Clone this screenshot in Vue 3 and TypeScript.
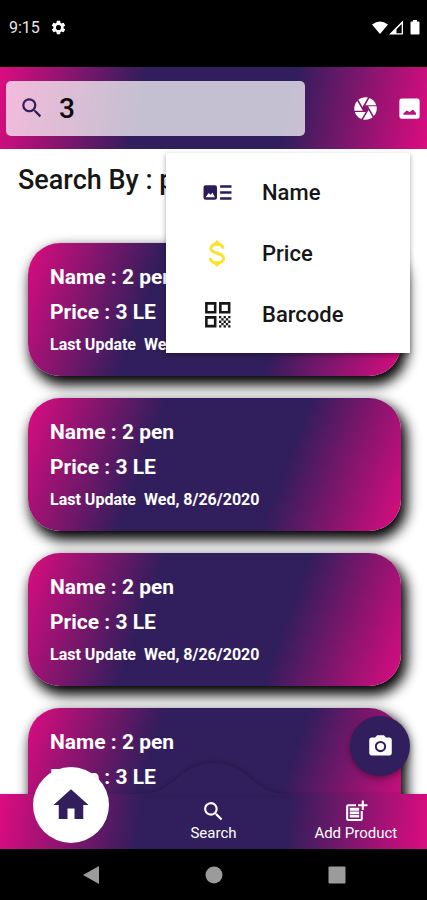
<script setup lang="ts">
import { ref } from 'vue'

interface Product {
  id: number
  name: string
  price: string
  updated: string
}

const query = ref('3')
const searchBy = ref('price')

const products = ref<Product[]>(
  [1, 2, 3, 4].map((id) => ({ id, name: '2 pen', price: '3 LE', updated: 'Wed, 8/26/2020' })),
)
</script>

<template>
  <div class="screen">
    <div class="status">
      <span class="clock">9:15</span>
      <svg class="gear" viewBox="0 0 24 24" aria-hidden="true">
        <path d="M19.14 12.94c.04-.3.06-.61.06-.94s-.02-.64-.07-.94l2.03-1.58a.49.49 0 0 0 .12-.61l-1.92-3.32a.49.49 0 0 0-.59-.22l-2.39.96a7 7 0 0 0-1.62-.94l-.36-2.54A.48.48 0 0 0 13.92 2.4h-3.84a.48.48 0 0 0-.47.41l-.36 2.54a7.3 7.3 0 0 0-1.62.94l-2.39-.96a.48.48 0 0 0-.59.22L2.74 8.87a.47.47 0 0 0 .12.61l2.03 1.58c-.05.3-.09.63-.09.94s.02.64.07.94l-2.03 1.58a.49.49 0 0 0-.12.61l1.92 3.32c.12.22.37.29.59.22l2.39-.96c.5.38 1.03.7 1.62.94l.36 2.54c.05.24.24.41.48.41h3.84c.24 0 .44-.17.47-.41l.36-2.54a7 7 0 0 0 1.62-.94l2.39.96c.22.08.47 0 .59-.22l1.92-3.32a.47.47 0 0 0-.12-.61zM12 15.600a3.600 3.600 0 1 1 0-7.200 3.600 3.600 0 0 1 0 7.200z" />
      </svg>
      <svg class="signals" viewBox="0 0 50 16" aria-hidden="true">
        <path d="M1 4.500Q9 -1.500 17 4.500L9 14z" />
        <path fill-rule="evenodd" d="M18 14.500L32 .5V14.500zM25.500 13.200H30.700V4L25.500 9.200z" />
        <path d="M42 1.500V0H46V1.500H47.500Q48.500 1.500 48.500 2.500V13.500Q48.500 14.500 47.500 14.500H40.500Q39.500 14.500 39.500 13.500V2.500Q39.500 1.500 40.500 1.500z" />
      </svg>
    </div>

    <header class="toolbar">
      <label class="field">
        <svg viewBox="0 0 24 24" aria-hidden="true">
          <path d="M15.500 14h-.79l-.28-.27A6.500 6.500 0 1 0 13.730 14.430l.27.28v.79l5 4.990L20.490 19zm-6 0a4.500 4.500 0 1 1 0-9 4.500 4.500 0 0 1 0 9z" />
        </svg>
        <input v-model="query" type="text" aria-label="Search products" />
      </label>
      <button class="tool" type="button" aria-label="Camera">
        <svg viewBox="0 0 24 24">
          <path d="M9.400 10.500l4.770-8.260C13.470 2.090 12.750 2 12 2c-2.400 0-4.600.85-6.320 2.250l3.660 6.350.06-.1zM21.540 9c-.92-2.920-3.150-5.260-6-6.340L11.880 9h9.660zm.26 1h-7.490l.29.5 4.760 8.250C21 16.970 22 14.610 22 12c0-.69-.07-1.350-.2-2zM8.540 12l-3.900-6.750C3.010 7.030 2 9.390 2 12c0 .69.07 1.350.2 2h7.490l-1.150-2zm-6.080 3c.92 2.920 3.150 5.260 6 6.340L12.120 15H2.460zm11.270 0l-3.900 6.760c.7.15 1.420.24 2.170.24 2.400 0 4.600-.85 6.320-2.250l-3.660-6.350-.93 1.600z" />
        </svg>
      </button>
      <button class="tool" type="button" aria-label="Gallery">
        <svg viewBox="0 0 24 24">
          <path fill-rule="evenodd" d="M5 3H19Q21 3 21 5V19Q21 21 19 21H5Q3 21 3 19V5Q3 3 5 3zM6.500 17.500H17.800V16L15 12.800L12.200 15.200L9.500 13.800L6.500 16.500z" />
        </svg>
      </button>
    </header>

    <main class="content">
      <h1>Search By : {{ searchBy }}</h1>

      <div class="menu" role="menu">
        <button type="button" role="menuitem" @click="searchBy = 'name'">
          <svg viewBox="0 0 28 28" fill="#2d1a58" aria-hidden="true">
            <path fill-rule="evenodd" d="M2.500 7H11.500Q13.500 7 13.500 9V19Q13.500 21 11.500 21H2.500Q.5 21 .5 19V9Q.5 7 2.500 7zM2.500 18.500H11.500L9 14L7.500 16.500L5.500 14.500z" />
            <path d="M16.500 7H27.500V9.300H16.500zM16.500 12.800H27.500V15.100H16.500zM16.500 18.700H27.500V21H16.500z" />
          </svg>
          <span>Name</span>
        </button>
        <button type="button" role="menuitem" @click="searchBy = 'price'">
          <svg viewBox="0 0 28 28" aria-hidden="true">
            <path fill="none" stroke="#fce22b" stroke-width="2.800" d="M19.500 9.500C19 6.500 16.500 5 13.500 5S7.500 6.600 7.500 9.200C7.500 15 20 12.500 20 18.600C20 21.500 17 23 13.500 23S7.200 21.500 6.900 18.200" />
            <path fill="#fce22b" d="M13.500 1L17.500 5H9.500zM13.500 27L17.500 23H9.500z" />
          </svg>
          <span>Price</span>
        </button>
        <button type="button" role="menuitem" @click="searchBy = 'barcode'">
          <svg viewBox="0 0 28 28" fill="#161616" aria-hidden="true">
            <path fill-rule="evenodd" d="M2 2H13V13H2zM4.500 4.500V10.500H10.500V4.500zM15.500 2H26.500V13H15.500zM18 4.500V10.500H24V4.500zM2 15.500H13V26.500H2zM4.500 18V24H10.500V18z" />
            <path d="M15.500 15.500h2.200v2.200h-2.200zM19.900 15.500h2.200v2.200h-2.200zM24.300 15.500h2.200v2.200h-2.200zM17.700 17.700h2.200v2.200h-2.200zM22.100 17.700h2.200v2.200h-2.200zM15.500 19.900h2.200v2.200h-2.200zM19.900 19.900h2.200v2.200h-2.200zM24.300 19.900h2.200v2.200h-2.200zM17.700 22.100h2.200v2.200h-2.200zM22.100 22.100h2.200v2.200h-2.200zM15.500 24.300h2.200v2.200h-2.200zM19.900 24.300h2.200v2.200h-2.200zM24.300 24.300h2.200v2.200h-2.200z" />
          </svg>
          <span>Barcode</span>
        </button>
      </div>

      <ul class="products">
        <li v-for="product in products" :key="product.id" class="card">
          <p>Name : {{ product.name }}</p>
          <p>Price : {{ product.price }}</p>
          <p class="updated"><span>Last Update</span><span>{{ product.updated }}</span></p>
        </li>
      </ul>

      <button class="fab" type="button" aria-label="Scan with camera">
        <svg viewBox="0 0 24 24">
          <circle cx="12" cy="12" r="3.200" />
          <path d="M9 2L7.170 4H4c-1.100 0-2 .9-2 2v12c0 1.100.9 2 2 2h16c1.100 0 2-.9 2-2V6c0-1.100-.9-2-2-2h-3.170L15 2H9zm3 15a5 5 0 1 1 0-10 5 5 0 0 1 0 10z" />
        </svg>
      </button>
    </main>

    <nav class="tabs">
      <svg class="bump" viewBox="0 0 150 34" aria-hidden="true">
        <path d="M0 33C38 33 38 2 75 2S112 33 150 33V34H0z" />
      </svg>
      <a class="home" href="#home" aria-label="Home">
        <svg viewBox="0 0 24 24"><path d="M10 20v-6h4v6h5v-8h3L12 3 2 12h3v8z" /></svg>
      </a>
      <a class="tab" href="#search">
        <svg viewBox="0 0 24 24" aria-hidden="true">
          <path d="M15.500 14h-.79l-.28-.27A6.500 6.500 0 1 0 13.730 14.430l.27.28v.79l5 4.990L20.490 19zm-6 0a4.500 4.500 0 1 1 0-9 4.500 4.500 0 0 1 0 9z" />
        </svg>
        <span>Search</span>
      </a>
      <a class="tab" href="#add">
        <svg viewBox="0 0 24 24" aria-hidden="true">
          <path d="M17 19.200H5V7h7.500V5H5Q3 5 3 7V19.200Q3 21.200 5 21.200H17Q19 21.200 19 19.200V11.500H17z" />
          <path d="M18 1.500h2V5h3.500v2H20v3.500h-2V7h-3.500V5H18z" />
          <path d="M6.500 8.500H15.500V11.200H6.500zM6.500 11.900H15.500V14.300H6.500zM6.500 15H15.500V17.700H6.500z" />
        </svg>
        <span>Add Product</span>
      </a>
    </nav>

    <div class="system">
      <button type="button" aria-label="Back"><svg viewBox="0 0 18 20"><path d="M17 1V19L1 10z" /></svg></button>
      <button type="button" aria-label="Home screen"><svg viewBox="0 0 18 20"><circle cx="9" cy="10" r="8.500" /></svg></button>
      <button type="button" aria-label="Recent apps"><svg viewBox="0 0 18 20"><rect x=".5" y="1.500" width="17" height="17" rx="1" /></svg></button>
    </div>
  </div>
</template>

<style>
body {
  background: #fff;
}
</style>

<style scoped>
* {
  box-sizing: border-box;
}

.screen {
  --pink: #dc0c80;
  --purple: #311e5c;
  display: flex;
  flex-direction: column;
  height: 100vh;
  font-family: Roboto, sans-serif;
  color: #161616;
}

button {
  border: 0;
  padding: 0;
  background: none;
  font: inherit;
  color: inherit;
  cursor: pointer;
}

svg {
  display: block;
}

.status {
  display: flex;
  align-items: center;
  flex: none;
  height: 67px;
  padding: 0 6px 12px 9px;
  background: #000;
  color: #e6e6e6;
}

.clock {
  font-size: 16px;
}

.gear {
  width: 17px;
  height: 17px;
  margin-left: 10px;
  fill: #fff;
}

.signals {
  width: 50px;
  height: 16px;
  margin-left: auto;
  fill: #fff;
}

.toolbar {
  display: flex;
  align-items: center;
  flex: none;
  gap: 17px;
  height: 82px;
  padding: 0 4px 0 6px;
  background: linear-gradient(101deg, var(--pink), var(--purple) 33%, var(--purple) 67%, var(--pink));
}

.field {
  display: flex;
  align-items: center;
  flex: 1;
  min-width: 0;
  height: 55px;
  margin-right: 30px;
  padding-left: 13px;
  gap: 14px;
  border-radius: 5px;
  background: rgba(255, 255, 255, 0.72);
}

.field svg {
  flex: none;
  width: 26px;
  height: 26px;
  fill: var(--purple);
}

.field input {
  flex: 1;
  min-width: 0;
  border: 0;
  padding: 0;
  outline: none;
  background: none;
  font: 500 28px Roboto, sans-serif;
  color: #0c0c0c;
}

.tool svg {
  width: 27px;
  height: 27px;
  fill: #fff;
}

.content {
  position: relative;
  display: flex;
  flex-direction: column;
  flex: 1;
  min-height: 0;
}

h1 {
  flex: none;
  margin: 0;
  padding: 14px 18px 16px;
  font-size: 27px;
  line-height: 34px;
  font-weight: 500;
}

.menu {
  position: absolute;
  z-index: 1;
  top: 4px;
  right: 17px;
  width: 244px;
  padding: 9px 0 8px;
  background: #fff;
  box-shadow: 0 2px 5px rgba(0, 0, 0, 0.35);
}

.menu button {
  display: flex;
  align-items: center;
  gap: 30px;
  width: 100%;
  height: 61px;
  padding-left: 37px;
  font-size: 22px;
  font-weight: 500;
}

.menu svg {
  width: 29px;
  height: 29px;
}

.products {
  display: grid;
  align-content: start;
  gap: 22px;
  flex: 1;
  min-height: 0;
  margin: 0;
  padding: 30px 26px 22px 28px;
  overflow-y: auto;
  scrollbar-width: none;
  list-style: none;
}

.card {
  height: 133px;
  padding: 17px 22px;
  border-radius: 32px;
  background: linear-gradient(110deg, var(--pink), var(--purple) 33%, var(--purple) 67%, var(--pink));
  box-shadow: 4px 7px 13px 2px #000;
  color: #fff;
  font-size: 21px;
  line-height: 35px;
  font-weight: 700;
}

.card p {
  margin: 0;
}

.card .updated {
  display: flex;
  gap: 8px;
  font-size: 16px;
  line-height: 30px;
}

.fab {
  position: absolute;
  right: 17px;
  bottom: 18px;
  display: grid;
  place-items: center;
  width: 60px;
  height: 60px;
  border-radius: 50%;
  background: var(--purple);
  box-shadow: 0 3px 6px rgba(0, 0, 0, 0.35);
}

.fab svg {
  width: 27px;
  height: 27px;
  fill: #fff;
}

.tabs {
  position: relative;
  display: grid;
  grid-template-columns: repeat(3, 1fr);
  flex: none;
  height: 55px;
  background: linear-gradient(97deg, var(--pink), var(--purple) 33%, var(--purple) 67%, var(--pink));
  box-shadow: 0 -1px 2px rgba(0, 0, 0, 0.1);
}

.bump {
  position: absolute;
  left: 50%;
  bottom: 100%;
  width: 150px;
  height: 34px;
  margin: 0 0 -1px -75px;
  fill: var(--purple);
  filter: drop-shadow(0 -1px 2px rgba(0, 0, 0, 0.2));
}

.home {
  position: relative;
  justify-self: center;
  display: grid;
  place-items: center;
  width: 76px;
  height: 76px;
  margin-top: -27px;
  border-radius: 50%;
  background: #fff;
}

.home svg {
  width: 42px;
  height: 42px;
  fill: var(--purple);
}

.tab {
  position: relative;
  display: flex;
  flex-direction: column;
  align-items: center;
  padding-top: 5px;
  color: #fff;
  font-size: 15px;
  line-height: 18px;
  text-decoration: none;
}

.tab svg {
  width: 25px;
  height: 25px;
  fill: #fff;
}

.system {
  display: flex;
  align-items: center;
  justify-content: center;
  flex: none;
  gap: 105px;
  height: 51px;
  background: #000;
}

.system svg {
  width: 18px;
  height: 20px;
  fill: #9b9b9b;
}
</style>
